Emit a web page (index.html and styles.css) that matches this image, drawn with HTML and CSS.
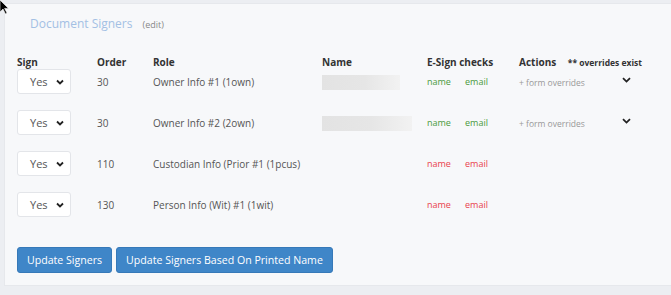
FILE: index.html
```html
<!DOCTYPE html>
<html lang="en">
  <head>
    <meta charset="UTF-8" />
    <title>Document Signers</title>
    <link rel="stylesheet" href="styles.css">
  </head>
  <body>
    <div class="page">
      <div class="card">
        <!-- Title -->
        <div class="card-title">
          <span class="title-text">Document Signers</span>
          <span class="title-edit">(edit)</span>
        </div>

        <!-- Signers table -->
        <div class="signers">
          <div class="signer-row head-row">
            <div>Sign</div>
            <div>Order</div>
            <div>Role</div>
            <div>Name</div>
            <div>E-Sign checks</div>
            <div>Actions <span class="overrides-note">** overrides exist</span></div>
          </div>

          <div class="signer-row">
            <div class="select-box">Yes <svg class="chev" width="8" height="6" viewBox="0 0 8 6"><polyline points="1,1.5 4,4.5 7,1.5" /></svg></div>
            <div>30</div>
            <div>Owner Info #1 (1own)</div>
            <div><div class="blur-name"></div></div>
            <div class="checks"><span class="ok">name</span><span class="ok">email</span></div>
            <div class="actions"><span class="overrides">+ form overrides</span><svg class="chev" width="9" height="6" viewBox="0 0 9 6"><polyline points="1,1.2 4.5,4.6 8,1.2" /></svg></div>
          </div>

          <div class="signer-row">
            <div class="select-box">Yes <svg class="chev" width="8" height="6" viewBox="0 0 8 6"><polyline points="1,1.5 4,4.5 7,1.5" /></svg></div>
            <div>30</div>
            <div>Owner Info #2 (2own)</div>
            <div><div class="blur-name wide"></div></div>
            <div class="checks"><span class="ok">name</span><span class="ok">email</span></div>
            <div class="actions"><span class="overrides">+ form overrides</span><svg class="chev" width="9" height="6" viewBox="0 0 9 6"><polyline points="1,1.2 4.5,4.6 8,1.2" /></svg></div>
          </div>

          <div class="signer-row">
            <div class="select-box">Yes <svg class="chev" width="8" height="6" viewBox="0 0 8 6"><polyline points="1,1.5 4,4.5 7,1.5" /></svg></div>
            <div>110</div>
            <div>Custodian Info (Prior #1 (1pcus)</div>
            <div></div>
            <div class="checks"><span class="bad">name</span><span class="bad">email</span></div>
            <div></div>
          </div>

          <div class="signer-row">
            <div class="select-box">Yes <svg class="chev" width="8" height="6" viewBox="0 0 8 6"><polyline points="1,1.5 4,4.5 7,1.5" /></svg></div>
            <div>130</div>
            <div>Person Info (Wit) #1 (1wit)</div>
            <div></div>
            <div class="checks"><span class="bad">name</span><span class="bad">email</span></div>
            <div></div>
          </div>
        </div>

        <div class="button-row">
          <button class="btn">Update Signers</button>
          <button class="btn">Update Signers Based On Printed Name</button>
        </div>
      </div>
    </div>

    <!-- mouse pointer -->
    <svg class="cursor" width="10" height="16" viewBox="0 0 10 16">
      <polygon points="0,0 0,12 3,9 5.5,14 7,13 4.6,8.4 8.5,8.4" fill="#000" stroke="#fff" stroke-width="0.6" />
    </svg>
  </body>
</html>
```

FILE: styles.css
```css
* {
  margin: 0;
  padding: 0;
  box-sizing: border-box;
}

html,
body {
  width: 100%;
  height: 100%;
}

body {
  background-color: #eceef2;
  font-family: 'Open Sans', sans-serif;
  color: #555;
  font-size: 10px;
  overflow: hidden;
}

.page {
  padding: 3px 0 0 4px;
}

.card {
  width: 700px;
  height: 283px;
  background-color: #f7f8fa;
  border: 1px solid #e6e8ec;
  border-right: none;
  padding: 11px 0 0 12px;
}

.card-title {
  display: flex;
  align-items: baseline;
  padding-left: 13px;
  height: 19px;
}

.title-text {
  font-size: 12px;
  color: #a3c0e4;
}

.title-edit {
  font-size: 9px;
  color: #888;
  margin-left: 10px;
}

.signers {
  display: flex;
  flex-direction: column;
  gap: 16px;
  margin-top: 21px;
}

.signer-row {
  display: grid;
  grid-template-columns: 80px 56px 169px 105px 92px 150px;
  height: 25px;
  align-items: center;
  white-space: nowrap;
}

.signer-row.head-row {
  height: 14px;
  margin-bottom: -16px;
  font-weight: 700;
  color: #333;
}

.overrides-note {
  font-size: 8.5px;
  margin-left: 9px;
}

.select-box {
  width: 54px;
  height: 25px;
  background-color: #fff;
  border: 1px solid #e3e5e9;
  border-radius: 3px;
  display: flex;
  align-items: center;
  justify-content: space-between;
  padding: 0 6px 0 12px;
  font-size: 11px;
  color: #555;
}

.chev polyline {
  fill: none;
  stroke: #222;
  stroke-width: 1.8;
}

.blur-name {
  width: 78px;
  height: 15px;
  margin-top: 2px;
  background: linear-gradient(90deg, #e3e3e3 0%, #e6e6e6 55%, #f2f2f2 100%);
  filter: blur(0.6px);
}

.blur-name.wide {
  width: 90px;
}

.checks {
  display: flex;
}

.checks span {
  font-size: 9px;
  width: 38px;
}

.ok {
  color: #4a9a3c;
}

.bad {
  color: #e9424c;
}

.actions {
  display: flex;
  align-items: center;
}

.overrides {
  font-size: 8.5px;
  color: #999;
  width: 103px;
  margin-top: 1px;
}

.actions .chev {
  margin-top: -3px;
}

.button-row {
  display: flex;
  gap: 4px;
  margin-top: 30px;
}

.btn {
  height: 26px;
  padding: 0 9px;
  background-color: #3f86c8;
  border: 1px solid #3679b8;
  border-radius: 3px;
  color: #fff;
  font-family: 'Open Sans', sans-serif;
  font-size: 10.6px;
}

.cursor {
  position: absolute;
  left: 0;
  top: 0;
}
```
